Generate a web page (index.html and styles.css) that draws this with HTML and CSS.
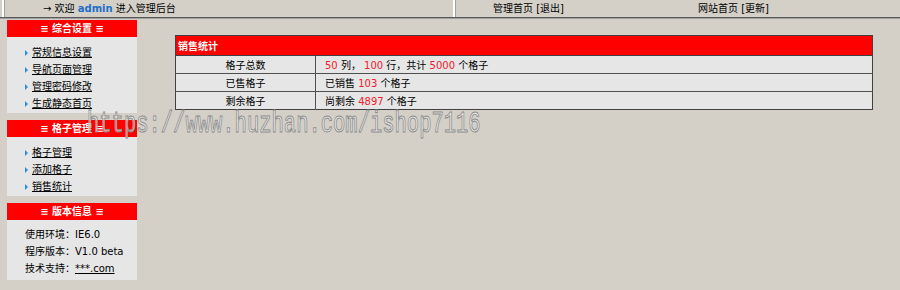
FILE: index.html
```html
<!DOCTYPE html>
<html lang="zh-CN">
<head>
  <meta charset="UTF-8">
  <title>管理后台</title>
  <link rel="stylesheet" href="styles.css">
</head>
<body>

<div id="topbar">
  <div class="top-cell welcome">→ 欢迎 <b class="user">admin</b> 进入管理后台</div>
  <div class="top-cell links">管理首页 <a href="#">[退出]</a></div>
  <div class="links plain">网站首页 <a href="#">[更新]</a></div>
</div>

<div id="page">
  <div id="sidebar">
    <div class="side-box">
      <div class="side-title">≡ 综合设置 ≡</div>
      <ul class="side-menu">
        <li><a href="#">常规信息设置</a></li>
        <li><a href="#">导航页面管理</a></li>
        <li><a href="#">管理密码修改</a></li>
        <li><a href="#">生成静态首页</a></li>
      </ul>
    </div>
    <div class="side-box">
      <div class="side-title">≡ 格子管理 ≡</div>
      <ul class="side-menu">
        <li><a href="#">格子管理</a></li>
        <li><a href="#">添加格子</a></li>
        <li><a href="#">销售统计</a></li>
      </ul>
    </div>
    <div class="side-box">
      <div class="side-title">≡ 版本信息 ≡</div>
      <div class="side-info">
        <div>使用环境：IE6.0</div>
        <div>程序版本：V1.0 beta</div>
        <div>技术支持：<a href="#">***.com</a></div>
      </div>
    </div>
  </div>

  <div id="main">
    <table class="stats">
      <tr><th colspan="2">销售统计</th></tr>
      <tr>
        <td class="name">格子总数</td>
        <td><span class="num">50</span> 列， <span class="num">100</span> 行，共计 <span class="num">5000</span> 个格子</td>
      </tr>
      <tr>
        <td class="name">已售格子</td>
        <td>已销售 <span class="num">103</span> 个格子</td>
      </tr>
      <tr>
        <td class="name">剩余格子</td>
        <td>尚剩余 <span class="num">4897</span> 个格子</td>
      </tr>
    </table>
  </div>
</div>

<div class="watermark">https://www.huzhan.com/ishop7116</div>

</body>
</html>
```

FILE: styles.css
```css
body {
  margin: 0;
  background-color: #d4d0c8;
  font-family: "DejaVu Sans", "Noto Sans CJK SC", sans-serif;
  font-size: 10px;
  color: #000;
}

a {
  color: #000;
}

#topbar {
  display: flex;
  height: 17px;
  line-height: 17px;
  border-bottom: 1px solid #5a5a5a;
  box-shadow: 0 1px 0 #a0a0a0;
}

.top-cell {
  border-left: 2px solid #fff;
  box-shadow: inset 1px 0 0 #a0a0a0;
}

.welcome {
  width: 410px;
  padding-left: 39px;
  margin-left: 2px;
}

.user {
  color: #1c6ec8;
}

.links {
  width: 165px;
  padding-left: 38px;
}

.links.plain {
  padding-left: 40px;
}

.links a {
  text-decoration: none;
}

#page {
  display: flex;
  align-items: flex-start;
  padding-top: 2px;
}

#sidebar {
  width: 130px;
  margin-left: 7px;
}

.side-box {
  background-color: #e6e6e6;
  margin-bottom: 7px;
}

.side-title {
  background-color: #ff0000;
  color: #fff;
  font-weight: bold;
  text-align: center;
  height: 17px;
  line-height: 17px;
}

.side-menu {
  list-style: none;
  margin: 0;
  padding: 7px 0 1px 18px;
  line-height: 17px;
}

.side-menu li::before {
  content: "";
  display: inline-block;
  border-left: 3px solid #2a8ee0;
  border-top: 3px solid transparent;
  border-bottom: 3px solid transparent;
  margin-right: 4px;
  vertical-align: 0;
}

.side-info {
  padding: 6px 0 3px 18px;
  line-height: 17px;
}

#main {
  margin-left: 38px;
  padding-top: 15px;
}

.stats {
  width: 698px;
  border-collapse: collapse;
  border: 1px solid #404040;
}

.stats th {
  background-color: #ff0000;
  color: #fff;
  text-align: left;
  height: 19px;
  padding: 0 2px;
  border-bottom: 1px solid #404040;
}

.stats td {
  background-color: #e6e6e6;
  height: 17px;
  padding: 0 9px;
  border-top: 1px solid #505050;
}

.stats td.name {
  width: 121px;
  text-align: center;
  border-right: 1px solid #505050;
}

.num {
  color: #f0202a;
}

.watermark {
  position: absolute;
  left: 87px;
  top: 108px;
  font-family: "Liberation Mono", monospace;
  font-size: 20.5px;
  color: rgba(255, 255, 255, 0.6);
  -webkit-text-stroke: 0.7px #8a8a8a;
  transform: scaleY(1.4);
  transform-origin: left top;
  pointer-events: none;
}
```
